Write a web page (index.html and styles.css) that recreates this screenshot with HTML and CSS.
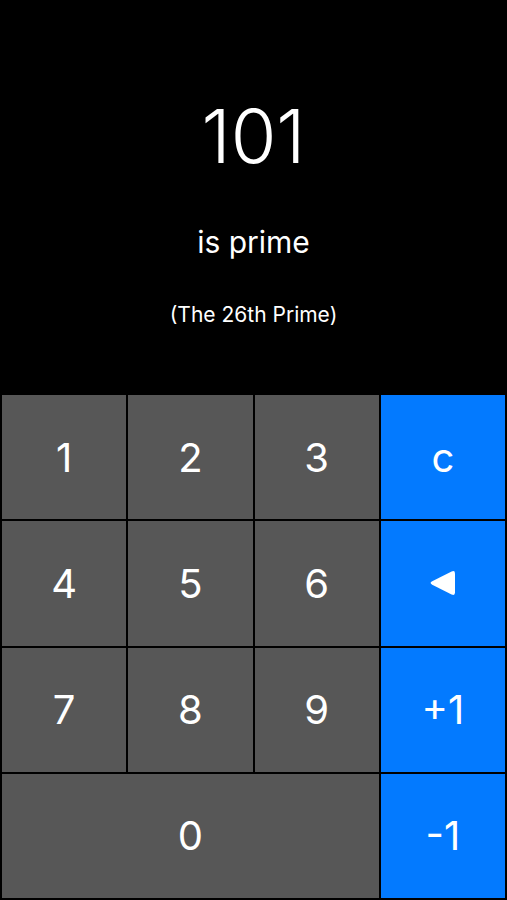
FILE: index.html
```html
<!DOCTYPE html>
<html lang="en">
<head>
    <meta charset="UTF-8">
    <meta name="viewport" content="width=device-width, initial-scale=1.0">
    <title>Prime Checker</title>
    <link rel="stylesheet" href="styles.css">
</head>
<body>

<div class="app">
    <div class="display">
        <div class="number">101</div>
        <div class="verdict">is prime</div>
        <div class="detail">(The 26th Prime)</div>
    </div>

    <div class="keypad">
        <button class="key">1</button>
        <button class="key">2</button>
        <button class="key">3</button>
        <button class="key action">c</button>
        <button class="key">4</button>
        <button class="key">5</button>
        <button class="key">6</button>
        <button class="key action">
            <svg class="back-icon" width="28" height="26" viewBox="0 0 28 26">
                <path d="M3.2 11.3 L22.6 1.6 Q26 0 26 3.6 L26 22.4 Q26 26 22.6 24.4 L3.2 14.7 Q0 13 3.2 11.3 Z" fill="#fff"/>
            </svg>
        </button>
        <button class="key">7</button>
        <button class="key">8</button>
        <button class="key">9</button>
        <button class="key action">+1</button>
        <button class="key zero">0</button>
        <button class="key action">-1</button>
    </div>
</div>

</body>
</html>
```

FILE: styles.css
```css
body {
    margin: 0;
    padding: 0;
    background-color: #000;
    font-family: Inter, "Open Sans", sans-serif;
    color: #fff;
}
.app {
    display: flex;
    flex-direction: column;
    height: 900px;
    width: 507px;
}
.display {
    height: 393px;
    display: flex;
    flex-direction: column;
    align-items: center;
}
.number {
    margin-top: 92px;
    font-size: 74px;
    font-weight: 300;
    line-height: 88px;
}
.verdict {
    margin-top: 44px;
    font-size: 30px;
    line-height: 36px;
}
.detail {
    margin-top: 42px;
    font-size: 21px;
    line-height: 26px;
}
.keypad {
    flex: 1;
    display: grid;
    grid-template-columns: repeat(4, 1fr);
    grid-template-rows: repeat(4, 1fr);
    gap: 2px;
    padding: 2px;
}
.key {
    border: none;
    margin: 0;
    padding: 0;
    background-color: #575757;
    color: #fff;
    font-family: Inter, "Open Sans", sans-serif;
    font-size: 40px;
    font-weight: 400;
    display: flex;
    justify-content: center;
    align-items: center;
}
.key.action {
    background-color: #037aff;
}
.key.zero {
    grid-column: span 3;
}
.back-icon {
    display: block;
}
```
